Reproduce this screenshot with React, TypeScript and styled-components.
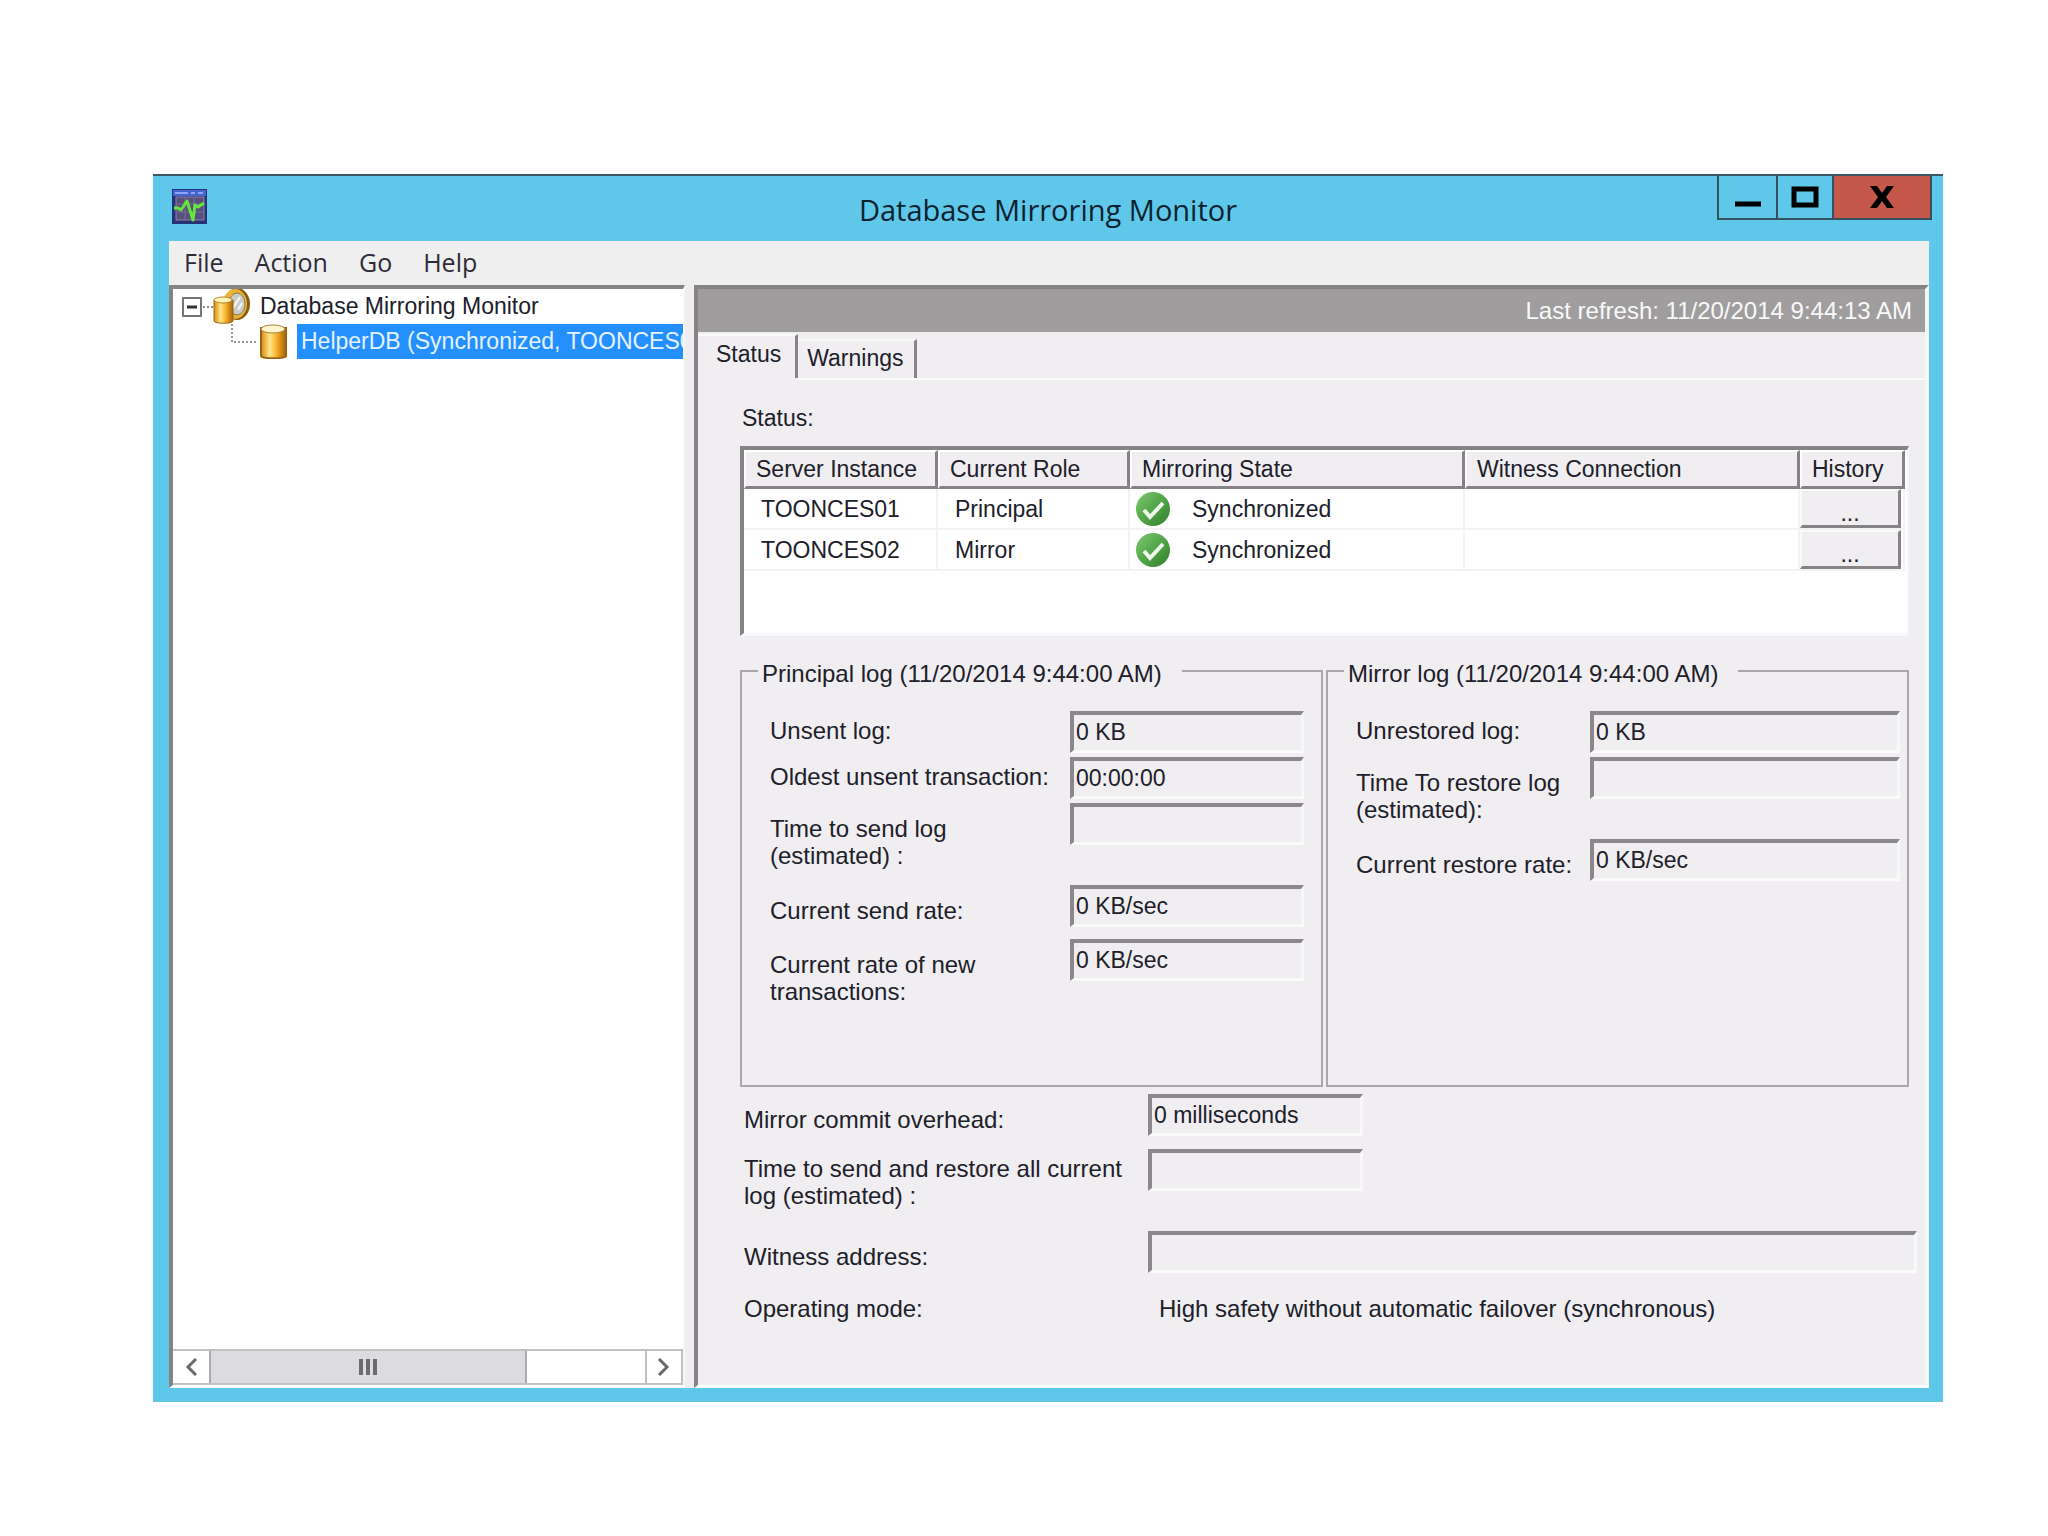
import React, { useState } from 'react';
import styled, { createGlobalStyle } from 'styled-components';

const c = {
  frame: '#5fc8ea',
  face: '#f0eef1',
  shade: '#858386',
  text: '#20202a',
  header: '#a09d9f',
  select: '#2490ff',
};

const GlobalStyle = createGlobalStyle`
  *, *::before, *::after { box-sizing: border-box; }
  body {
    margin: 0;
    background: #ffffff;
    color: ${c.text};
    font: 23px/27px "Liberation Sans", Arial, sans-serif;
  }
  button, input { font: inherit; color: inherit; }
  ul { list-style: none; margin: 0; padding: 0; }
`;

const Page = styled.main`
  padding: 174px 105px 135px 153px;
`;

const Window = styled.section`
  display: flex;
  flex-direction: column;
  background: ${c.frame};
  border-top: 2px solid #3c5663;
`;

const TitleBar = styled.header`
  display: grid;
  grid-template-columns: 1fr auto 1fr;
  height: 65px;
  padding: 0 11px;
  svg { display: block; }
`;

const AppIcon = styled.svg`
  margin: 13px 0 0 8px;
`;

const Title = styled.h1`
  margin: 0;
  color: #0b2230;
  font: 400 29px/67px "Open Sans", "Noto Sans", sans-serif;
`;

const Controls = styled.div`
  display: flex;
  justify-self: end;
  height: 44px;
`;

const ControlButton = styled.button<{ $width: number; $close?: boolean }>`
  display: flex;
  align-items: center;
  justify-content: center;
  width: ${(p) => p.$width}px;
  padding: 0;
  border: 2px solid #35505e;
  border-top: 0;
  background: ${(p) => (p.$close ? '#c5584b' : 'transparent')};
  & + & { border-left: 0; }
`;

const Client = styled.div`
  margin: 0 14px 14px 16px;
  background: ${c.face};
`;

const MenuBar = styled.nav`
  display: flex;
  gap: 31px;
  height: 44px;
  padding: 0 15px;
  background: #efefef;
`;

const MenuItem = styled.button`
  padding: 0 0 2px;
  border: 0;
  background: none;
  color: #2e2b38;
  font: 25px/42px "Open Sans", "Noto Sans", sans-serif;
`;

const Panes = styled.div`
  display: grid;
  grid-template-columns: 516px minmax(0, 1fr);
  gap: 9px;
`;

const TreePane = styled.aside`
  display: flex;
  flex-direction: column;
  border: 4px solid ${c.shade};
  border-right: 2px solid #f6f6f6;
  border-bottom: 3px solid #ffffff;
  background: #ffffff;
  min-width: 0;
`;

const TreeItems = styled.ul`
  flex: 1;
  overflow: hidden;
`;

const TreeRow = styled.li<{ $level: number }>`
  display: flex;
  align-items: center;
  height: 35px;
  padding-left: ${(p) => (p.$level ? 58 : 9)}px;
  white-space: nowrap;
  svg { flex: none; }
`;

const TreeLabel = styled.span<{ $selected?: boolean }>`
  flex: 1;
  align-self: stretch;
  margin-left: ${(p) => (p.$selected ? 9 : 6)}px;
  padding-left: 4px;
  line-height: 35px;
  overflow: hidden;
  background: ${(p) => (p.$selected ? c.select : 'none')};
  color: ${(p) => (p.$selected ? '#e4f2ff' : c.text)};
`;

const ScrollBar = styled.div`
  display: flex;
  height: 36px;
  border: 2px solid #c2c0c3;
  border-left: 0;
  background: #ffffff;
`;

const ScrollButton = styled.button`
  display: flex;
  align-items: center;
  justify-content: center;
  width: 36px;
  padding: 0;
  border: 0;
  background: #ffffff;
  &:last-child { border-left: 2px solid #c2c0c3; }
`;

const ScrollTrack = styled.div`
  flex: 1;
`;

const ScrollThumb = styled.div`
  display: flex;
  align-items: center;
  justify-content: center;
  gap: 3px;
  width: 73%;
  height: 100%;
  border: 2px solid #acaaad;
  border-width: 0 2px;
  background: #dcdcde;
`;

const Grip = styled.i`
  width: 4px;
  height: 16px;
  background: #6c6a6d;
`;

const Details = styled.section`
  border: 4px solid ${c.shade};
  border-right-color: #f7f6f7;
  border-bottom: 3px solid #ffffff;
  min-width: 0;
`;

const RefreshBar = styled.div`
  height: 43px;
  padding-right: 13px;
  background: ${c.header};
  color: #f8f8f8;
  font-size: 24px;
  line-height: 43px;
  text-align: right;
`;

const Tabs = styled.div`
  display: flex;
  align-items: flex-end;
  height: 46px;
`;

const Tab = styled.button<{ $active: boolean }>`
  height: ${(p) => (p.$active ? 44 : 39)}px;
  padding: ${(p) => (p.$active ? '0 14px 5px 18px' : '0 10px 2px 9px')};
  border: 0;
  border-right: 3px solid ${c.shade};
  border-top: 2px solid #faf9fa;
  align-self: ${(p) => (p.$active ? 'flex-start' : 'flex-end')};
  margin-top: 2px;
  background: ${c.face};
  box-shadow: ${(p) => (p.$active ? 'none' : '0 2px 0 #fbfafb')};
`;

const TabRule = styled.div`
  flex: 1;
  border-bottom: 2px solid #fbfafb;
  margin-bottom: -2px;
`;

const TabPanel = styled.div`
  padding: 27px 8px 63px 42px;
`;

const Caption = styled.div`
  padding-left: 2px;
`;

const TableFrame = styled.div`
  min-height: 190px;
  margin: 14px 8px 0 0;
  padding-right: 2px;
  border: 4px solid ${c.shade};
  border-right: 2px solid #f7f6f8;
  border-bottom: 3px solid #f9f8fa;
  background: #ffffff;
`;

const Table = styled.table`
  width: 100%;
  border-collapse: separate;
  border-spacing: 0;
  table-layout: fixed;
`;

const Th = styled.th<{ $width?: string }>`
  width: ${(p) => p.$width};
  height: 39px;
  padding: 0 0 0 10px;
  border: 2px solid #ffffff;
  border-right: 3px solid ${c.shade};
  border-bottom: 3px solid ${c.shade};
  background: ${c.face};
  font-weight: 400;
  text-align: left;
  white-space: nowrap;
`;

const Td = styled.td<{ $flush?: boolean }>`
  height: 41px;
  padding: ${(p) => (p.$flush ? '0 2px 0 0' : '1px 0 0 17px')};
  border-right: 2px solid #f4f2f5;
  border-bottom: 2px solid #f4f2f5;
`;

const State = styled.span`
  display: flex;
  align-items: center;
  gap: 21px;
  margin-left: -11px;
`;

const HistoryButton = styled.button`
  display: block;
  width: 100%;
  height: 39px;
  padding: 9px 0 0;
  border: 2px solid #fbfafb;
  border-right: 3px solid ${c.shade};
  border-bottom: 3px solid ${c.shade};
  background: ${c.face};
  font-size: 23px;
  line-height: 20px;
`;

const Groups = styled.div`
  display: grid;
  grid-template-columns: 1fr 1fr;
  gap: 3px;
  margin: 19px 8px 0 0;
`;

const Group = styled.fieldset`
  min-width: 0;
  margin: 0;
  padding: 24px 7px 80px 28px;
  border: 2px solid #a9a7aa;
`;

const Legend = styled.legend`
  margin-left: -12px;
  padding: 5px 20px 0 4px;
  font-size: 24px;
`;

const Row = styled.div<{ $label: number; $height: number; $end?: number }>`
  display: grid;
  grid-template-columns: ${(p) => p.$label}px minmax(0, 1fr);
  align-items: start;
  min-height: ${(p) => p.$height}px;
  padding-right: ${(p) => p.$end ?? 0}px;
`;

const Label = styled.label<{ $low?: boolean }>`
  padding-top: ${(p) => (p.$low ? 12 : 6)}px;
  font-size: 24px;
  white-space: pre-line;
`;

const Value = styled.input<{ $short?: boolean }>`
  width: ${(p) => (p.$short ? '215px' : '100%')};
  height: 42px;
  padding: 0 2px 1px;
  border: 4px solid #8a888b;
  border-right: 3px solid #f8f7f9;
  border-bottom: 3px solid #fbfafb;
  border-radius: 0;
  background: ${c.face};
  outline: 0;
`;

const Summary = styled.div`
  padding: 7px 0 0 4px;
`;

const Mode = styled.output`
  padding: 6px 0 0 11px;
  font-size: 24px;
`;

function MonitorIcon() {
  return (
    <AppIcon width="35" height="35" viewBox="0 0 35 35" aria-hidden="true">
      <rect width="35" height="35" fill="#253275" />
      <rect x="1" y="1" width="33" height="6" fill="#4664cf" />
      <path d="M3 4h13M19 4h4M26 4h5" stroke="#8ea6ef" strokeWidth="2" />
      <rect x="4" y="8" width="28" height="23" fill="#57507c" stroke="#8d83a8" />
      <path d="M5 15h26M5 23h26M13 9v22M22 9v22" stroke="#766c91" />
      <path d="M2 19h4l3 2 6-9 6 19 2-15 3 2 6-4" fill="none" stroke="#65e53d" strokeWidth="3" strokeLinejoin="round" />
    </AppIcon>
  );
}

function Gold({ id }: { id: string }) {
  return (
    <defs>
      <linearGradient id={id}>
        <stop offset="0" stopColor="#d98a10" />
        <stop offset=".35" stopColor="#ffe58a" />
        <stop offset=".6" stopColor="#f9b62c" />
        <stop offset="1" stopColor="#a65f05" />
      </linearGradient>
    </defs>
  );
}

function RootIcon() {
  return (
    <svg width="68" height="36" viewBox="0 0 68 36" aria-hidden="true">
      <Gold id="gold-root" />
      <rect x="1" y="9" width="18" height="18" fill="#fff" stroke="#77757a" strokeWidth="2" />
      <path d="M5 18h10" stroke="#333" strokeWidth="3" />
      <path d="M21 18h12" stroke="#888" strokeWidth="2" strokeDasharray="2 2" />
      <ellipse cx="55" cy="15" rx="13" ry="16" fill="#8a5c12" />
      <ellipse cx="53" cy="15" rx="12" ry="15" fill="#e8b438" />
      <ellipse cx="55" cy="15" rx="8" ry="11" fill="#c9ccc9" stroke="#8f7c4b" />
      <path d="M51 19l7-11M56 21l4-7" stroke="#f6f9f7" strokeWidth="2" />
      <path d="M32 11v21c0 3 19 3 19 0V11z" fill="url(#gold-root)" stroke="#9c6413" />
      <ellipse cx="41" cy="11" rx="9" ry="3" fill="#fff3b8" stroke="#b98325" />
    </svg>
  );
}

function DatabaseIcon() {
  return (
    <svg width="57" height="35" viewBox="0 0 57 35" aria-hidden="true">
      <Gold id="gold-db" />
      <path d="M1 0v18h25" fill="none" stroke="#999" strokeWidth="2" strokeDasharray="2 2" />
      <path d="M30 4v28c0 3 25 3 25 0V4z" fill="url(#gold-db)" stroke="#9c6413" strokeWidth="2" />
      <ellipse cx="42" cy="5" rx="12" ry="4" fill="#fff6cf" stroke="#a9802e" />
    </svg>
  );
}

function CheckIcon() {
  return (
    <svg width="35" height="35" viewBox="0 0 35 35" aria-hidden="true">
      <defs>
        <linearGradient id="ok" x1="0" y1="0" x2="1" y2="1">
          <stop offset="0" stopColor="#7fc873" />
          <stop offset=".5" stopColor="#52a548" />
          <stop offset="1" stopColor="#2f7d2c" />
        </linearGradient>
      </defs>
      <circle cx="17" cy="17" r="17" fill="url(#ok)" />
      <path d="M8 18l6 7 13-14" fill="none" stroke="#eef8ec" strokeWidth="4" />
    </svg>
  );
}

function Chevron({ d }: { d: string }) {
  return (
    <svg width="14" height="18" viewBox="0 0 14 18" aria-hidden="true">
      <path d={d} fill="none" stroke="#6c6a6d" strokeWidth="3" />
    </svg>
  );
}

interface FieldProps {
  id: string;
  label: string;
  value?: string;
  labelWidth: number;
  height?: number;
  low?: boolean;
  short?: boolean;
  end?: number;
}

function Field({ id, label, value = '', labelWidth, height = 46, low, short, end }: FieldProps) {
  return (
    <Row $label={labelWidth} $height={height} $end={end}>
      <Label htmlFor={id} $low={low}>{label}</Label>
      <Value id={id} value={value} $short={short} readOnly />
    </Row>
  );
}

const servers = [
  { name: 'TOONCES01', role: 'Principal', state: 'Synchronized' },
  { name: 'TOONCES02', role: 'Mirror', state: 'Synchronized' },
];

const principal = [
  { id: 'unsent', label: 'Unsent log:', value: '0 KB' },
  { id: 'oldest', label: 'Oldest unsent transaction:', value: '00:00:00' },
  { id: 'send-time', label: 'Time to send log\n(estimated) :', low: true, height: 82 },
  { id: 'send-rate', label: 'Current send rate:', value: '0 KB/sec', low: true, height: 54 },
  { id: 'new-rate', label: 'Current rate of new\ntransactions:', value: '0 KB/sec', low: true, height: 66 },
];

const mirror = [
  { id: 'unrestored', label: 'Unrestored log:', value: '0 KB' },
  { id: 'restore-time', label: 'Time To restore log\n(estimated):', low: true, height: 82 },
  { id: 'restore-rate', label: 'Current restore rate:', value: '0 KB/sec', low: true },
];

export default function App() {
  const [tab, setTab] = useState('Status');
  return (
    <Page>
      <GlobalStyle />
      <Window>
        <TitleBar>
          <MonitorIcon />
          <Title>Database Mirroring Monitor</Title>
          <Controls>
            <ControlButton aria-label="Minimize" $width={61}>
              <svg width="26" height="32" viewBox="0 0 26 32"><path d="M0 23h26" stroke="#000" strokeWidth="5" /></svg>
            </ControlButton>
            <ControlButton aria-label="Maximize" $width={56}>
              <svg width="28" height="22" viewBox="0 0 28 22"><path d="M3 3h22v16H3z" fill="none" stroke="#000" strokeWidth="5" /></svg>
            </ControlButton>
            <ControlButton aria-label="Close" $width={98} $close>
              <svg width="24" height="22" viewBox="0 0 24 22"><path d="M0 0h7l5 7 5-7h7l-8 11 8 11h-7l-5-7-5 7H0l8-11z" /></svg>
            </ControlButton>
          </Controls>
        </TitleBar>
        <Client>
          <MenuBar>
            {['File', 'Action', 'Go', 'Help'].map((m) => <MenuItem key={m}>{m}</MenuItem>)}
          </MenuBar>
          <Panes>
            <TreePane>
              <TreeItems>
                <TreeRow $level={0}>
                  <RootIcon />
                  <TreeLabel>Database Mirroring Monitor</TreeLabel>
                </TreeRow>
                <TreeRow $level={1}>
                  <DatabaseIcon />
                  <TreeLabel $selected>HelperDB (Synchronized, TOONCES01</TreeLabel>
                </TreeRow>
              </TreeItems>
              <ScrollBar>
                <ScrollButton aria-label="Scroll left"><Chevron d="M12 1L4 9l8 8" /></ScrollButton>
                <ScrollTrack>
                  <ScrollThumb><Grip /><Grip /><Grip /></ScrollThumb>
                </ScrollTrack>
                <ScrollButton aria-label="Scroll right"><Chevron d="M2 1l8 8-8 8" /></ScrollButton>
              </ScrollBar>
            </TreePane>
            <Details>
              <RefreshBar>Last refresh: 11/20/2014 9:44:13 AM</RefreshBar>
              <Tabs role="tablist">
                {['Status', 'Warnings'].map((t) => (
                  <Tab key={t} role="tab" aria-selected={t === tab} $active={t === tab} onClick={() => setTab(t)}>{t}</Tab>
                ))}
                <TabRule />
              </Tabs>
              <TabPanel role="tabpanel">
                <Caption>Status:</Caption>
                <TableFrame>
                  <Table>
                    <thead>
                      <tr>
                        <Th $width="194px">Server Instance</Th>
                        <Th $width="192px">Current Role</Th>
                        <Th $width="335px">Mirroring State</Th>
                        <Th>Witness Connection</Th>
                        <Th $width="105px">History</Th>
                      </tr>
                    </thead>
                    <tbody>
                      {servers.map((s) => (
                        <tr key={s.name}>
                          <Td>{s.name}</Td>
                          <Td>{s.role}</Td>
                          <Td><State><CheckIcon />{s.state}</State></Td>
                          <Td />
                          <Td $flush><HistoryButton aria-label={`History of ${s.name}`}>...</HistoryButton></Td>
                        </tr>
                      ))}
                    </tbody>
                  </Table>
                </TableFrame>
                <Groups>
                  <Group>
                    <Legend>Principal log (11/20/2014 9:44:00 AM)</Legend>
                    {principal.map((f) => <Field key={f.id} {...f} labelWidth={300} end={10} />)}
                  </Group>
                  <Group>
                    <Legend>Mirror log (11/20/2014 9:44:00 AM)</Legend>
                    {mirror.map((f) => <Field key={f.id} {...f} labelWidth={234} />)}
                  </Group>
                </Groups>
                <Summary>
                  <Field id="overhead" label="Mirror commit overhead:" value="0 milliseconds" labelWidth={404} height={55} low short />
                  <Field id="total" label={'Time to send and restore all current\nlog (estimated) :'} labelWidth={404} height={82} short />
                  <Field id="witness" label="Witness address:" labelWidth={404} height={58} low />
                  <Row $label={404} $height={27}>
                    <Label as="span">Operating mode:</Label>
                    <Mode>High safety without automatic failover (synchronous)</Mode>
                  </Row>
                </Summary>
              </TabPanel>
            </Details>
          </Panes>
        </Client>
      </Window>
    </Page>
  );
}
